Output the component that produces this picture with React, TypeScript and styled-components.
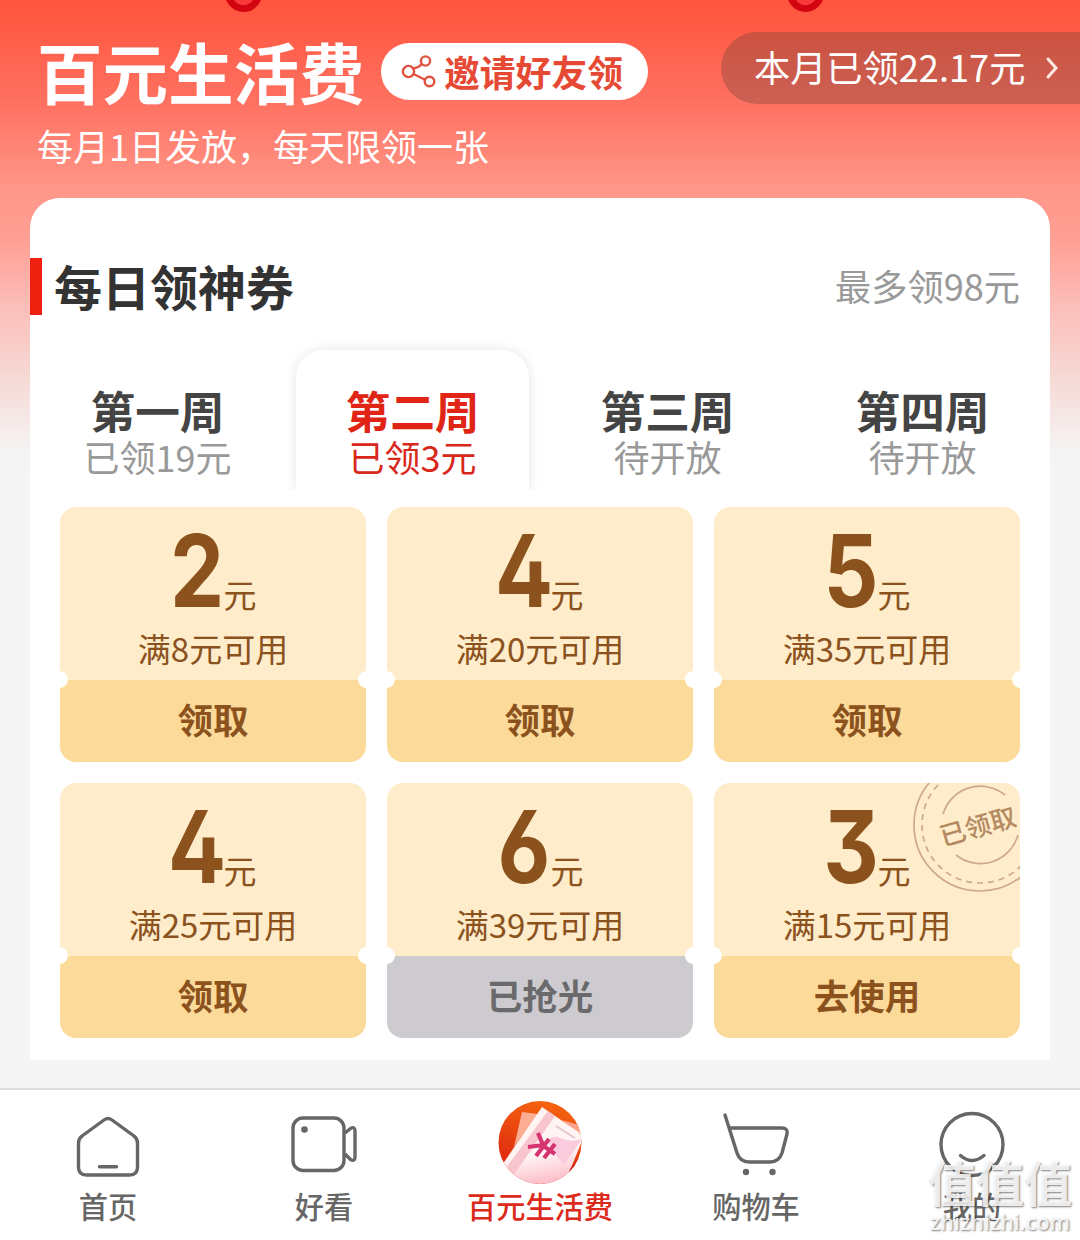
import React from 'react';
import styled, { createGlobalStyle } from 'styled-components';

const GlobalStyle = createGlobalStyle`
  * {
    box-sizing: border-box;
  }

  body {
    margin: 0;
    background: #f5f5f5;
    font-family: 'Noto Sans CJK SC', sans-serif;
  }
`;

const Page = styled.div`
  position: relative;
  display: flex;
  flex-direction: column;
  width: 1080px;
  height: 1240px;
  overflow: hidden;
  background: linear-gradient(
      #ff543d 0,
      #ff5c46 30px,
      #ff7060 100px,
      #ff9789 190px,
      #ff9f94 240px,
      #fbbfba 310px,
      #f6dad6 380px,
      #f5f3f3 450px,
      #f5f5f5 475px
    )
    no-repeat #f5f5f5;
`;

const Ring = styled.i<{ $left: number }>`
  position: absolute;
  top: -25px;
  left: ${({ $left }) => $left}px;
  width: 37px;
  height: 37px;
  border: 7px solid #d20510;
  border-radius: 50%;
  background: #f9383a;
`;

const Header = styled.header`
  display: flex;
  justify-content: space-between;
  align-items: flex-start;
  height: 198px;
  padding: 32px 0 0 37px;
  color: #fff;
`;

const TitleRow = styled.div`
  display: flex;
  align-items: flex-start;
  gap: 15px;
  height: 84px;
`;

const Title = styled.h1`
  margin: 0;
  width: 329px;
  font-size: 65.5px;
  line-height: 77px;
  font-weight: 700;
  white-space: nowrap;
`;

const InviteButton = styled.div`
  display: flex;
  align-items: center;
  gap: 7px;
  width: 267px;
  height: 57px;
  margin-top: 11px;
  padding-left: 20px;
  border-radius: 29px;
  background: #fff;
  color: #e64a35;
  font-size: 35.8px;
  line-height: 57px;
  font-weight: 700;
  white-space: nowrap;
`;

const SubTitle = styled.p`
  margin: 4px 0 0;
  font-size: 36px;
  line-height: 50px;
`;

const MonthTotal = styled.div`
  display: flex;
  align-items: center;
  gap: 20px;
  width: 359px;
  height: 72px;
  padding-left: 33px;
  border-radius: 36px 0 0 36px;
  background: rgba(80, 60, 50, 0.29);
  font-size: 36.2px;
  line-height: 68px;
  white-space: nowrap;

  span {
    height: 72px;
  }
`;

const Card = styled.main`
  height: 862px;
  margin: 0 30px;
  border-radius: 30px 30px 0 0;
  background: #fff;
`;

const CardHead = styled.div`
  display: flex;
  justify-content: space-between;
  align-items: flex-start;
  padding: 60px 30px 0 0;
`;

const CardTitle = styled.h2`
  height: 57px;
  margin: 0;
  padding-left: 12px;
  border-left: 12px solid #ee2010;
  color: #333;
  font-size: 48px;
  line-height: 55px;
  font-weight: 700;
`;

const CardNote = styled.span`
  color: #999;
  font-size: 36.2px;
  line-height: 54px;
`;

const Tabs = styled.div`
  display: grid;
  grid-template-columns: repeat(4, 255px);
  height: 175px;
  padding-top: 35px;
  overflow: hidden;
`;

const Tab = styled.div<{ $active: boolean }>`
  height: 140px;
  margin: 0 11px;
  padding-top: 34px;
  border-radius: 27px 27px 0 0;
  text-align: center;
  color: ${({ $active }) => ($active ? '#e02516' : '#444')};
  box-shadow: ${({ $active }) => ($active ? '0 0 12px rgba(0, 0, 0, 0.11)' : 'none')};
`;

const TabName = styled.div`
  font-size: 44.7px;
  line-height: 51px;
  font-weight: 700;
`;

const TabState = styled.div<{ $active: boolean }>`
  font-size: 36px;
  line-height: 43px;
  color: ${({ $active }) => ($active ? '#d8281c' : '#999')};
`;

const CouponGrid = styled.div`
  display: grid;
  grid-template-columns: repeat(3, 306px);
  grid-auto-rows: 255px;
  gap: 21px;
  padding: 17px 30px 0;
`;

const CouponBox = styled.div`
  position: relative;
  overflow: hidden;
  border-radius: 16px;
  color: #8b521d;
  text-align: center;
`;

const CouponTop = styled.div`
  height: 173px;
  padding-top: 20px;
  background: #feecca;
`;

const Amount = styled.div`
  display: flex;
  justify-content: center;
  align-items: baseline;
  height: 96px;
  line-height: 90px;
`;

const Figure = styled.b`
  display: flex;
  justify-content: center;
  width: 54px;
  font-family: Inter, sans-serif;
  font-size: 100px;
  font-weight: 700;
  font-feature-settings: 'cv02', 'cv03', 'cv09';
  transform: translateY(-1px) scaleX(0.86);
`;

const Yuan = styled.span`
  font-size: 33px;
`;

const Rule = styled.div`
  font-size: 33px;
  line-height: 50px;
`;

const CouponAction = styled.div<{ $soldOut: boolean }>`
  height: 82px;
  background: ${({ $soldOut }) => ($soldOut ? '#cdcbcf' : '#fcda9a')};
  color: ${({ $soldOut }) => ($soldOut ? '#6a6a6c' : '#8b521d')};
  font-size: 35.5px;
  line-height: 77px;
  font-weight: 700;
`;

const Notch = styled.i<{ $side: 'left' | 'right' }>`
  position: absolute;
  top: 164px;
  ${({ $side }) => $side}: -9px;
  width: 17px;
  height: 17px;
  border-radius: 50%;
  background: #fff;
`;

const Stamp = styled.div`
  position: absolute;
  top: -12px;
  left: 199px;
  width: 107px;
  height: 122px;
  color: #b48a62;

  svg {
    display: block;
  }
`;

const StampText = styled.span`
  position: absolute;
  top: 39px;
  left: 25px;
  width: 79px;
  font-size: 26px;
  line-height: 30px;
  font-weight: 500;
  white-space: nowrap;
  transform: rotate(-16deg);
`;

const NavBar = styled.nav`
  display: grid;
  grid-template-columns: repeat(5, 1fr);
  height: 152px;
  margin-top: 28px;
  border-top: 2px solid #dcdcdc;
  background: #fff;
`;

const NavItem = styled.div<{ $active?: boolean }>`
  display: flex;
  flex-direction: column;
  align-items: center;
  padding-top: 11px;
  color: ${({ $active }) => ($active ? '#dc2a1c' : '#666')};
  font-size: 29.2px;
  line-height: 36px;
  font-weight: 500;

  svg {
    height: 84px;
    margin-bottom: 2px;
  }
`;

const Watermark = styled.div`
  position: absolute;
  left: 928px;
  top: 1153px;
  width: 146px;
  color: rgba(255, 255, 255, 0.85);
  font-size: 48px;
  line-height: 56px;
  font-weight: 700;
  white-space: nowrap;
  text-shadow: 1px 1px 2px rgba(0, 0, 0, 0.5);
`;

const WatermarkUrl = styled.div`
  margin-left: 2px;
  font-family: 'Open Sans', sans-serif;
  font-size: 21.5px;
  line-height: 26px;
  font-weight: 600;
`;

const ShareIcon = () => (
  <svg width="36" height="34" viewBox="0 0 36 34" fill="none" stroke="#e0533f" strokeWidth="2.4">
    <circle cx="7.5" cy="16.5" r="5.6" />
    <circle cx="24.5" cy="6" r="4.6" />
    <circle cx="28.5" cy="26.5" r="4.8" />
    <path d="M12.5 13.5Q17 13 21 9M12.5 19L24 24.8" />
  </svg>
);

const ArrowIcon = () => (
  <svg width="14" height="24" viewBox="0 0 14 24" fill="none" stroke="#ffe9e4" strokeWidth="3" strokeLinecap="round">
    <path d="M3 3L11 12L3 21" />
  </svg>
);

const HomeIcon = () => (
  <svg width="84" viewBox="66 1101 84 84" fill="none" stroke="#666" strokeWidth="3.4" strokeLinecap="round" strokeLinejoin="round">
    <path d="M104 1120Q108 1117 112 1120L134 1136Q137.5 1139 137.5 1143V1167Q137.5 1175 129.5 1175H86.5Q78.5 1175 78.5 1167V1143Q78.5 1139 82 1136Z" />
    <path d="M99.5 1166.7H116.5" />
  </svg>
);

const VideoIcon = () => (
  <svg width="84" viewBox="282 1101 84 84" fill="none" stroke="#666" strokeWidth="3.4" strokeLinejoin="round">
    <rect x="293" y="1118" width="51" height="52.5" rx="10" />
    <path d="M345 1133L350.5 1128.5Q355 1126 355 1131V1157Q355 1162 350.5 1159.5L345 1154" />
    <circle cx="304.5" cy="1129.5" r="3.3" fill="#666" stroke="none" />
  </svg>
);

const CouponIcon = () => (
  <svg width="84" viewBox="0 0 84 84">
    <defs>
      <linearGradient id="disc" x1="0.6" y1="0" x2="0.3" y2="1">
        <stop offset="0" stopColor="#f5640f" />
        <stop offset="1" stopColor="#d91c10" />
      </linearGradient>
      <linearGradient id="paper" x1="0.4" y1="0" x2="0.6" y2="1">
        <stop offset="0" stopColor="#fff3f4" />
        <stop offset="0.6" stopColor="#fff3f4" />
        <stop offset="1" stopColor="#fbb8c4" />
      </linearGradient>
      <clipPath id="discClip">
        <circle cx="42" cy="41.5" r="41.5" />
      </clipPath>
    </defs>
    <g clipPath="url(#discClip)">
      <rect width="84" height="84" fill="url(#disc)" />
      <path d="M24 11L40 13L16 46Z" fill="#fbac91" />
      <path d="M64 19L84 25V36Z" fill="#fba58d" />
      <path d="M44 6L86 35L66 84H10L4 64Z" fill="url(#paper)" />
      <path d="M50 10L57 15L15 75L8 67Z" fill="#f9c5cd" />
      <path d="M50 41Q54 33 62 37Q72 42 84 38L66 64L58 54Z" fill="#f9cbdc" />
      <path d="M58 25L77 37" stroke="#e6c6d0" strokeWidth="2" />
      <path d="M84 53L72 68L68 84H84Z" fill="#c92719" />
      <path d="M40 32L45 44L30 46M44 44L57 53M51 38L38 55M57 43L46 57" fill="none" stroke="#d53470" strokeWidth="4.2" />
    </g>
  </svg>
);

const CartIcon = () => (
  <svg width="84" viewBox="714 1101 84 84" fill="none" stroke="#666" strokeWidth="3.4" strokeLinecap="round" strokeLinejoin="round">
    <path d="M725 1115L737 1153Q740 1162 749 1162H770Q779 1162 782 1153L787 1134Q788 1128 782 1128H730" />
    <circle cx="746" cy="1172" r="3.2" fill="#666" stroke="none" />
    <circle cx="772.5" cy="1172" r="3.2" fill="#666" stroke="none" />
  </svg>
);

const MineIcon = () => (
  <svg width="84" viewBox="930 1101 84 84" fill="none" stroke="#666" strokeWidth="3.4" strokeLinecap="round">
    <circle cx="972" cy="1144.5" r="31" />
    <path d="M960.5 1155.5Q972 1165.5 984 1155.5" />
  </svg>
);

interface CouponProps {
  amount: number;
  limit: number;
  action: string;
  soldOut?: boolean;
  received?: boolean;
}

const Coupon: React.FC<CouponProps> = ({ amount, limit, action, soldOut = false, received = false }) => {
  return (
    <CouponBox>
      <CouponTop>
        <Amount>
          <Figure>{amount}</Figure>
          <Yuan>元</Yuan>
        </Amount>
        <Rule>满{limit}元可用</Rule>
      </CouponTop>
      <CouponAction $soldOut={soldOut}>{action}</CouponAction>
      <Notch $side="left" />
      <Notch $side="right" />
      {received && (
        <Stamp>
          <svg width="134" height="122" viewBox="0 0 134 122" fill="none" stroke="#cda98a" strokeWidth="1.7">
            <circle cx="67" cy="54" r="66" />
            <circle cx="67" cy="54" r="58" strokeDasharray="6 5" />
            <path d="M30 43A39 39 0 0 1 92 24M43 84A39 39 0 0 0 105 64" />
          </svg>
          <StampText>已领取</StampText>
        </Stamp>
      )}
    </CouponBox>
  );
};

const weeks = [
  { name: '第一周', state: '已领19元' },
  { name: '第二周', state: '已领3元' },
  { name: '第三周', state: '待开放' },
  { name: '第四周', state: '待开放' },
];

const coupons: CouponProps[] = [
  { amount: 2, limit: 8, action: '领取' },
  { amount: 4, limit: 20, action: '领取' },
  { amount: 5, limit: 35, action: '领取' },
  { amount: 4, limit: 25, action: '领取' },
  { amount: 6, limit: 39, action: '已抢光', soldOut: true },
  { amount: 3, limit: 15, action: '去使用', received: true },
];

const App: React.FC = () => {
  return (
    <Page>
      <GlobalStyle />
      <Ring $left={225} />
      <Ring $left={787} />
      <Header>
        <div>
          <TitleRow>
            <Title>百元生活费</Title>
            <InviteButton>
              <ShareIcon />
              邀请好友领
            </InviteButton>
          </TitleRow>
          <SubTitle>每月1日发放，每天限领一张</SubTitle>
        </div>
        <MonthTotal>
          <span>本月已领22.17元</span>
          <ArrowIcon />
        </MonthTotal>
      </Header>
      <Card>
        <CardHead>
          <CardTitle>每日领神券</CardTitle>
          <CardNote>最多领98元</CardNote>
        </CardHead>
        <Tabs>
          {weeks.map((week, index) => (
            <Tab key={week.name} $active={index === 1}>
              <TabName>{week.name}</TabName>
              <TabState $active={index === 1}>{week.state}</TabState>
            </Tab>
          ))}
        </Tabs>
        <CouponGrid>
          {coupons.map((coupon) => (
            <Coupon key={coupon.limit} {...coupon} />
          ))}
        </CouponGrid>
      </Card>
      <NavBar>
        <NavItem><HomeIcon />首页</NavItem>
        <NavItem><VideoIcon />好看</NavItem>
        <NavItem $active><CouponIcon />百元生活费</NavItem>
        <NavItem><CartIcon />购物车</NavItem>
        <NavItem><MineIcon />我的</NavItem>
      </NavBar>
      <Watermark>
        值值值
        <WatermarkUrl>zhizhizhi.com</WatermarkUrl>
      </Watermark>
    </Page>
  );
};

export default App;
